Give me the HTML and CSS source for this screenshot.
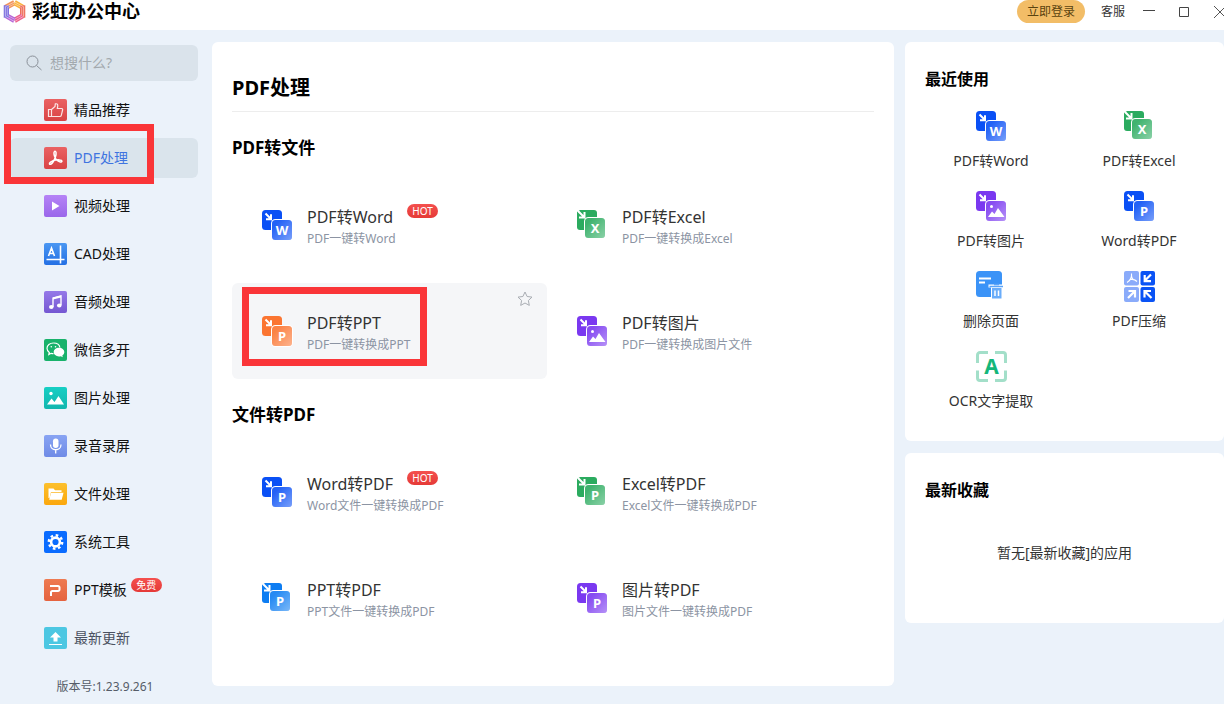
FILE: index.html
```html
<!DOCTYPE html>
<html lang="zh-CN">
<head>
<meta charset="UTF-8">
<meta name="viewport" content="width=device-width, initial-scale=1.0">
<title>彩虹办公中心</title>
<link rel="stylesheet" href="styles.css">
</head>
<body>

<!-- 共用图标 -->
<svg class="defs" aria-hidden="true">
    <defs>
        <linearGradient id="shine" x1="0" y1="0" x2="1" y2="1">
            <stop offset="0.2" stop-color="#fff" stop-opacity="0.1"/>
            <stop offset="1" stop-color="#fff" stop-opacity="0.45"/>
        </linearGradient>
    </defs>
    <symbol id="pair" viewBox="0 0 31 31">
        <rect width="20" height="20" rx="3.5" fill="currentColor"/>
        <path d="M3.5 3.5l5 5M9 4.2v5H4" fill="none" stroke="#fff" stroke-width="2"/>
        <rect x="9" y="9" width="22" height="22" rx="4.5" fill="#fff"/>
        <rect x="10" y="10" width="20" height="20" rx="3.5" fill="currentColor"/>
        <rect x="10" y="10" width="20" height="20" rx="3.5" fill="url(#shine)"/>
    </symbol>
    <symbol id="pair-small" viewBox="0 0 31 31">
        <path d="M3 0h14a3 3 0 0 1 3 3v17H3a3 3 0 0 1-3-3V2z" fill="currentColor"/>
        <path d="M1 1l6 6M7.5 2v5.5H2" fill="none" stroke="#fff" stroke-width="2"/>
        <rect x="7" y="7" width="22" height="22" rx="4.5" fill="#fff"/>
        <rect x="8" y="8" width="20" height="20" rx="3.5" fill="currentColor"/>
        <rect x="8" y="8" width="20" height="20" rx="3.5" fill="url(#shine)"/>
    </symbol>
    <symbol id="photo" viewBox="0 0 31 31">
        <circle cx="15.5" cy="15.5" r="1.5" fill="#fff"/>
        <path d="M12 26l4-5.500 2.500 2.500 3.500-6 6.500 9z" fill="#fff"/>
    </symbol>
    <symbol id="acrobat" viewBox="0 0 23 22">
        <path d="M10.500 4.500c1.800-.8 2 2 .9 5.500-1 3-3 6.500-4.600 7.200-1.500.6-2-.9-.3-2.100 2.400-1.600 6-2.500 9.200-2.200 3 .2 2.800 2.300.6 2-2.600-.5-5-3-5.900-6-.5-2-.8-3.800.1-4.400z" fill="none" stroke="#fff" stroke-width="1.500"/>
    </symbol>
</svg>

<header class="topbar">
    <svg class="logo" viewBox="0 0 24 24" aria-hidden="true">
        <g fill="none" stroke-width="5.500">
            <path d="M2.500 8L12 2.700" stroke="#f2955c"/>
            <path d="M12 2.700L20.500 7.500" stroke="#f9b23c"/>
            <path d="M20.500 5.500v13" stroke="#ef6f5a"/>
            <path d="M20.500 16.500L12 21.300" stroke="#ec5f8c"/>
            <path d="M12 21.300L3.500 16.500" stroke="#b565d8"/>
            <path d="M3.500 18.500v-13" stroke="#7f72e0"/>
        </g>
        <path d="M12 2l9.500 5v10L12 22.500 2.500 17V7z" fill="none" stroke="#fff" stroke-width="0.700" stroke-opacity="0.700"/>
        <path d="M12 4l7.500 4v8L12 20l-7.500-4V8z" fill="none" stroke="#fff" stroke-width="0.600" stroke-opacity="0.700"/>
    </svg>
    <h1 class="brand">彩虹办公中心</h1>
    <button class="login" type="button">立即登录</button>
    <a class="service" href="#">客服</a>
    <button class="win win-min" type="button" aria-label="最小化"><svg width="12" height="12"><path d="M0 4.500h12" stroke="#444"/></svg></button>
    <button class="win win-max" type="button" aria-label="最大化"><svg width="10" height="12"><path d="M.5 1.500h9v9h-9z" fill="none" stroke="#444"/></svg></button>
    <button class="win win-close" type="button" aria-label="关闭"><svg width="10" height="12"><path d="M0 0l12 12M12 0L0 12" stroke="#555"/></svg></button>
</header>

<div class="layout">
    <nav class="sidebar">
        <label class="search">
            <svg viewBox="0 0 16 16" aria-hidden="true"><circle cx="6.500" cy="6.500" r="5.500"/><path d="M10.500 10.500l5 4.500"/></svg>
            <input type="text" placeholder="想搜什么?" aria-label="搜索">
        </label>

        <a class="nav-item" href="#">
            <svg class="nav-icon bg-red" viewBox="0 0 23 22"><path d="M4.500 10.500h3v7h-3zM7.500 10.500l3.500-3 .3-2.600c1.900-.6 2.700.6 2.400 2.400l-.4 2.200h4.200c1 0 1.300.6 1.100 1.500l-1.300 5.300c-.2.900-.7 1.200-1.500 1.200H7.500" fill="none" stroke="#fff" stroke-opacity="0.850" stroke-width="1.200"/></svg>
            精品推荐
        </a>
        <a class="nav-item active" href="#">
            <svg class="nav-icon bg-red" viewBox="0 0 23 22"><use href="#acrobat"/></svg>
            PDF处理
            <span class="marker marker-nav"></span>
        </a>
        <a class="nav-item" href="#">
            <svg class="nav-icon bg-violet" viewBox="0 0 23 22"><path d="M8 6.500v9l7.500-4.500z" fill="#fff"/></svg>
            视频处理
        </a>
        <a class="nav-item" href="#">
            <svg class="nav-icon bg-blue" viewBox="0 0 23 22"><path d="M4.500 13L7.500 5l3 8M5.500 10.500h4M2.500 16.500h18M16.500 2.500v18" fill="none" stroke="#fff" stroke-width="1.600"/></svg>
            CAD处理
        </a>
        <a class="nav-item" href="#">
            <svg class="nav-icon bg-purple" viewBox="0 0 23 22"><path d="M9 16V7l8-2v9" fill="none" stroke="#fff" stroke-width="1.400"/><path d="M9 6.500l8-2v2l-8 2z" fill="#fff"/><ellipse cx="7.300" cy="16" rx="2.300" ry="1.900" fill="#fff"/><ellipse cx="15.300" cy="14.500" rx="2.300" ry="1.900" fill="#fff"/></svg>
            音频处理
        </a>
        <a class="nav-item" href="#">
            <svg class="nav-icon bg-green" viewBox="0 0 23 22"><path d="M9.500 4C5.800 4 3 6.300 3 9.300c0 1.700.9 3.200 2.300 4.200L4.800 15.500l2.300-1.200c.8.200 1.600.3 2.400.3" fill="none" stroke="#fff" stroke-width="1.200"/><path d="M9.500 4c3.300 0 6 1.900 6.400 4.500" fill="none" stroke="#fff" stroke-width="1.200"/><circle cx="7.300" cy="7.800" r=".8" fill="#fff"/><circle cx="11.500" cy="7.800" r=".8" fill="#fff"/><path d="M15 8.800c-3 0-5.300 1.900-5.300 4.300s2.300 4.300 5.300 4.300c.6 0 1.200-.1 1.800-.2l2 1-.5-1.700c1.300-.8 2-2 2-3.400 0-2.400-2.300-4.300-5.300-4.300z" fill="#fff"/></svg>
            微信多开
        </a>
        <a class="nav-item" href="#">
            <svg class="nav-icon bg-teal" viewBox="0 0 23 22"><circle cx="7" cy="6.500" r="1.700" fill="#fff"/><path d="M3 17.500l4.500-6 3 3.500L14.500 9l5.500 8.500z" fill="#fff"/></svg>
            图片处理
        </a>
        <a class="nav-item" href="#">
            <svg class="nav-icon bg-indigo" viewBox="0 0 23 22"><rect x="9" y="3.500" width="5.500" height="9.500" rx="2.700" fill="#fff"/><path d="M6.500 9.500c0 7 10.500 7 10.500 0M11.700 15v3.500" fill="none" stroke="#fff" stroke-width="1.300"/></svg>
            录音录屏
        </a>
        <a class="nav-item" href="#">
            <svg class="nav-icon bg-amber" viewBox="0 0 23 22"><path d="M4.500 5.500h5l1.500 1.700h6.500V9H7L5.500 15h-1z" fill="#fff"/><path d="M7 9.800h12.500l-1.800 7H5.200z" fill="#fff"/></svg>
            文件处理
        </a>
        <a class="nav-item" href="#">
            <svg class="nav-icon bg-royal" viewBox="0 0 23 22"><circle cx="11.500" cy="11" r="6.700" fill="none" stroke="#fff" stroke-width="2.400" stroke-dasharray="2.600 2.660"/><circle cx="11.500" cy="11" r="4.400" fill="none" stroke="#fff" stroke-width="2.600"/></svg>
            系统工具
        </a>
        <a class="nav-item" href="#">
            <svg class="nav-icon bg-orange" viewBox="0 0 23 22"><path d="M6 7h8a1.500 1.500 0 0 1 1.500 1.500v2a1.500 1.500 0 0 1-1.500 1.500H8.500A1.500 1.500 0 0 0 7 13.500v3.500" fill="none" stroke="#fff" stroke-width="2"/></svg>
            <span class="badge-host">PPT模板<span class="badge badge-free">免费</span></span>
        </a>
        <a class="nav-item muted" href="#">
            <svg class="nav-icon bg-cyan" viewBox="0 0 23 22"><path d="M11.500 5l5.500 5.500h-3.500v4h-4v-4H6z" fill="#fff"/><path d="M5 17.500h13" stroke="#fff" stroke-width="1.200"/></svg>
            最新更新
        </a>

        <p class="version">版本号:1.23.9.261</p>
    </nav>

    <main class="panel content">
        <h2 class="page-title">PDF处理</h2>

        <h3 class="section-title">PDF转文件</h3>
        <div class="tools">
            <a class="tool" href="#">
                <svg class="tool-icon blue" viewBox="0 0 31 31"><use href="#pair"/><text x="20" y="25">W</text></svg>
                <span class="tool-text">
                    <span class="tool-name">PDF转Word<span class="badge">HOT</span></span>
                    <span class="tool-desc">PDF一键转Word</span>
                </span>
            </a>
            <a class="tool" href="#">
                <svg class="tool-icon green" viewBox="0 0 31 31"><use href="#pair-small"/><text x="18" y="23">X</text></svg>
                <span class="tool-text">
                    <span class="tool-name">PDF转Excel</span>
                    <span class="tool-desc">PDF一键转换成Excel</span>
                </span>
            </a>
            <div class="tool hover">
                <svg class="tool-icon orange" viewBox="0 0 31 31"><use href="#pair"/><text x="20" y="25">P</text></svg>
                <a class="tool-text" href="#">
                    <span class="tool-name">PDF转PPT</span>
                    <span class="tool-desc">PDF一键转换成PPT</span>
                </a>
                <button class="star" type="button" aria-label="收藏"><svg viewBox="0 0 16 16"><path d="M8 1l2.100 4.500 4.900.6-3.600 3.400.9 4.900L8 12l-4.300 2.400.9-4.900L1 6.100l4.900-.6z"/></svg></button>
                <span class="marker marker-tool"></span>
            </div>
            <a class="tool" href="#">
                <svg class="tool-icon purple" viewBox="0 0 31 31"><use href="#pair"/><use href="#photo"/></svg>
                <span class="tool-text">
                    <span class="tool-name">PDF转图片</span>
                    <span class="tool-desc">PDF一键转换成图片文件</span>
                </span>
            </a>
        </div>

        <h3 class="section-title">文件转PDF</h3>
        <div class="tools">
            <a class="tool" href="#">
                <svg class="tool-icon blue" viewBox="0 0 31 31"><use href="#pair"/><text x="20" y="25">P</text></svg>
                <span class="tool-text">
                    <span class="tool-name">Word转PDF<span class="badge">HOT</span></span>
                    <span class="tool-desc">Word文件一键转换成PDF</span>
                </span>
            </a>
            <a class="tool" href="#">
                <svg class="tool-icon green" viewBox="0 0 31 31"><use href="#pair-small"/><text x="18" y="23">P</text></svg>
                <span class="tool-text">
                    <span class="tool-name">Excel转PDF</span>
                    <span class="tool-desc">Excel文件一键转换成PDF</span>
                </span>
            </a>
            <a class="tool" href="#">
                <svg class="tool-icon sky" viewBox="0 0 31 31"><use href="#pair-small"/><text x="18" y="23">P</text></svg>
                <span class="tool-text">
                    <span class="tool-name">PPT转PDF</span>
                    <span class="tool-desc">PPT文件一键转换成PDF</span>
                </span>
            </a>
            <a class="tool" href="#">
                <svg class="tool-icon purple" viewBox="0 0 31 31"><use href="#pair"/><text x="20" y="25">P</text></svg>
                <span class="tool-text">
                    <span class="tool-name">图片转PDF</span>
                    <span class="tool-desc">图片文件一键转换成PDF</span>
                </span>
            </a>
        </div>
    </main>

    <aside class="side">
        <section class="panel recent">
            <h3 class="side-title">最近使用</h3>
            <div class="recent-grid">
                <a class="recent-item" href="#"><svg class="tool-icon blue" viewBox="0 0 31 31"><use href="#pair"/><text x="20" y="25">W</text></svg>PDF转Word</a>
                <a class="recent-item" href="#"><svg class="tool-icon green" viewBox="0 0 31 31"><use href="#pair-small"/><text x="18" y="23">X</text></svg>PDF转Excel</a>
                <a class="recent-item" href="#"><svg class="tool-icon purple" viewBox="0 0 31 31"><use href="#pair"/><use href="#photo"/></svg>PDF转图片</a>
                <a class="recent-item" href="#"><svg class="tool-icon blue" viewBox="0 0 31 31"><use href="#pair"/><text x="20" y="25">P</text></svg>Word转PDF</a>
                <a class="recent-item" href="#">
                    <svg class="tool-icon" viewBox="0 0 31 31">
                        <rect width="26" height="26" rx="3.500" fill="#3b93f7"/>
                        <path d="M3 7.500h12M3 11.500h6" stroke="#fff" stroke-width="2"/>
                        <path d="M12.500 13.500h15v3h-1.300V28H15V16.500h-2.500z" fill="#fff"/>
                        <path d="M16 17h9.500v10.500H16z" fill="#6aadfa"/>
                        <path d="M13.500 15.500h13.500M18 13.500h5" stroke="#5aa4f9" stroke-width="1.600"/>
                        <path d="M19 19.500v5.500M22.500 19.500v5.500" stroke="#fff" stroke-width="1.500"/>
                    </svg>删除页面</a>
                <a class="recent-item" href="#">
                    <svg class="tool-icon" viewBox="0 0 31 31">
                        <rect width="15" height="14.500" rx="2" fill="#8aabfa"/>
                        <rect x="16.500" width="14.500" height="14.500" rx="2" fill="#0a53f5"/>
                        <rect y="16" width="15" height="15" rx="2" fill="#8aabfa"/>
                        <rect x="16.500" y="16" width="14.500" height="15" rx="2" fill="#0a53f5"/>
                        <path d="M7.500 2.500c.5 4-1 7-4.500 9M6.500 8.500c2.500-.5 4.500 0 6.500 2M7.500 4c0 2.500 1 4.500 3 5" fill="none" stroke="#fff" stroke-width="1.100"/>
                        <path d="M27 3.500l-6 6M20.700 4v6.200H27M4 27l6.500-6.500M4.500 20h6.500v6.500M27.500 27L21 20.500M20.500 26.500V20H27" fill="none" stroke="#fff" stroke-width="2.200"/>
                    </svg>PDF压缩</a>
                <a class="recent-item" href="#">
                    <svg class="tool-icon ocr" viewBox="0 0 31 31">
                        <path d="M1.500 12V4A2.500 2.500 0 0 1 4 1.500h8M19 1.500h8A2.500 2.500 0 0 1 29.500 4v8M29.500 19.500V27a2.500 2.500 0 0 1-2.500 2.500h-8M12 29.500H4A2.500 2.500 0 0 1 1.500 27v-7.500" fill="none" stroke="#a3dfc9" stroke-width="3"/>
                        <text x="15.500" y="23">A</text>
                    </svg>OCR文字提取</a>
            </div>
        </section>

        <section class="panel favorites">
            <h3 class="side-title">最新收藏</h3>
            <p class="empty">暂无[最新收藏]的应用</p>
        </section>
    </aside>
</div>

</body>
</html>
```

FILE: styles.css
```css
* {
    box-sizing: border-box;
}
body {
    margin: 0;
    min-height: 100vh;
    background-color: #ebf2fa;
    color: #333;
    font-family: "Noto Sans", "Noto Sans CJK SC", sans-serif;
    font-size: 14px;
    line-height: 20px;
}
h1, h2, h3, p {
    margin: 0;
}
a {
    color: inherit;
    text-decoration: none;
}
button {
    padding: 0;
    border: none;
    background: none;
    font: inherit;
    color: inherit;
    cursor: pointer;
}
svg {
    display: block;
    flex-shrink: 0;
}
.defs {
    position: absolute;
    width: 0;
    height: 0;
}

/* 顶部 */
.topbar {
    display: flex;
    align-items: center;
    height: 30px;
    padding: 0 0 7px 3px;
    background-color: #fff;
    font-size: 12px;
}
.logo {
    width: 23px;
    height: 23px;
}
.brand {
    margin: 0 auto 0 6px;
    color: #000;
    font-size: 18px;
    line-height: 23px;
}
.login {
    width: 68px;
    height: 23px;
    border-radius: 12px;
    background-color: #f2bd67;
    color: #5a430f;
}
.service {
    margin-left: 16px;
}
.win-min {
    margin-left: 18px;
}
.win-max {
    margin-left: 24px;
}
.win-close {
    margin-left: 25px;
}

.layout {
    display: flex;
    align-items: flex-start;
}

/* 左侧菜单 */
.sidebar {
    display: flex;
    flex-direction: column;
    flex-shrink: 0;
    gap: 8px;
    width: 212px;
    padding: 15px 14px 0 10px;
}
.search {
    display: flex;
    align-items: center;
    gap: 8px;
    height: 36px;
    margin-bottom: 1px;
    padding: 0 16px;
    border-radius: 6px;
    background-color: #dae3eb;
}
.search svg {
    width: 16px;
    height: 16px;
    fill: none;
    stroke: #8a9199;
}
.search input {
    width: 100%;
    padding: 0;
    border: none;
    outline: none;
    background: none;
    font: inherit;
}
.search input::placeholder {
    color: #a3a9ae;
}
.nav-item {
    position: relative;
    display: flex;
    align-items: center;
    gap: 7px;
    height: 40px;
    padding-left: 34px;
    border-radius: 6px;
    color: #111;
}
.nav-item.active {
    background-color: #dae4ec;
    color: #3f74e0;
}
.nav-item.muted {
    color: #4a5160;
}
.nav-icon {
    width: 23px;
    height: 22px;
    border-radius: 2px;
}
.bg-red { background: linear-gradient(#ea6263, #d94344); }
.bg-violet { background: linear-gradient(#b583f6, #9a67ea); }
.bg-blue { background: linear-gradient(#4a97f2, #2470e4); }
.bg-purple { background: linear-gradient(#9579e8, #7558d2); }
.bg-green { background: #18b26b; }
.bg-teal { background: linear-gradient(#16cfc4, #12b6ae); }
.bg-indigo { background: linear-gradient(#88a4f3, #6f8be6); }
.bg-amber { background: linear-gradient(#fcc02c, #fba70d); }
.bg-royal { background: #0a6cff; }
.bg-orange { background: linear-gradient(#ee7b52, #e5633f); }
.bg-cyan { background: #4cc7e2; }
.version {
    padding: 11px 0 0 2px;
    color: #555c68;
    font-size: 12px;
    text-align: center;
}

/* 角标 */
.badge-host {
    position: relative;
}
.badge {
    position: absolute;
    top: -2px;
    left: 100%;
    width: 31px;
    height: 14px;
    margin-left: 14px;
    border-radius: 7px;
    background: linear-gradient(#f4504e, #e53a37);
    color: #fff;
    font-size: 10px;
    line-height: 14px;
    text-align: center;
}
.badge-free {
    margin-left: 4px;
}

/* 红色标注框 */
.marker {
    position: absolute;
    border: 7px solid #fa3538;
    pointer-events: none;
}
.marker-nav {
    top: -14px;
    left: -6px;
    width: 150px;
    height: 60px;
}
.marker-tool {
    top: 4px;
    left: 10px;
    width: 185px;
    height: 79px;
}

/* 中间内容 */
.panel {
    border-radius: 6px;
    background-color: #fff;
}
.content {
    flex: 1;
    margin-top: 12px;
    padding: 31px 20px 40px;
}
.page-title {
    padding-bottom: 8px;
    border-bottom: 1px solid #ededed;
    color: #000;
    font-size: 20px;
    line-height: 30px;
}
.section-title {
    padding: 23px 0 17px;
    color: #000;
    font-size: 17px;
    line-height: 25px;
}
.tools {
    display: grid;
    grid-template-columns: 1fr 1fr;
    row-gap: 10px;
    padding-right: 12px;
}
.tool {
    position: relative;
    display: flex;
    align-items: center;
    gap: 14px;
    height: 96px;
    padding-left: 30px;
    border-radius: 6px;
}
.tool.hover {
    background-color: #f5f6f8;
}
.tool-icon {
    width: 31px;
    height: 31px;
}
.tool-icon text {
    fill: #fff;
    font-size: 13px;
    font-weight: bold;
    text-anchor: middle;
}
.tool-icon.ocr text {
    fill: #14b67a;
    font-size: 21px;
}
.blue { color: #0a50f5; }
.green { color: #2bab5f; }
.orange { color: #fb7531; }
.purple { color: #7a38f0; }
.sky { color: #0d7df2; }
.tool-text {
    display: flex;
    flex-direction: column;
    align-items: flex-start;
    padding-top: 6px;
}
.tool-name {
    position: relative;
    font-size: 16px;
    line-height: 22px;
}
.tool-desc {
    color: #8c94a3;
    font-size: 12px;
    line-height: 22px;
}
.star {
    position: absolute;
    top: 8px;
    right: 14px;
}
.star svg {
    width: 16px;
    height: 16px;
    fill: none;
    stroke: #a9adb3;
}

/* 右侧 */
.side {
    display: flex;
    flex-direction: column;
    flex-shrink: 0;
    gap: 12px;
    width: 319px;
    margin: 12px 0 0 11px;
}
.side-title {
    padding-left: 20px;
    color: #000;
    font-size: 16px;
    line-height: 24px;
}
.recent {
    padding: 25px 0 10px;
}
.recent-grid {
    display: grid;
    grid-template-columns: 1fr 1fr;
    grid-auto-rows: 80px;
    padding: 20px 11px 0 12px;
}
.recent-item {
    display: flex;
    flex-direction: column;
    align-items: center;
    gap: 9px;
}
.favorites {
    padding: 25px 0 60px;
}
.empty {
    padding-top: 41px;
    text-align: center;
}
```
